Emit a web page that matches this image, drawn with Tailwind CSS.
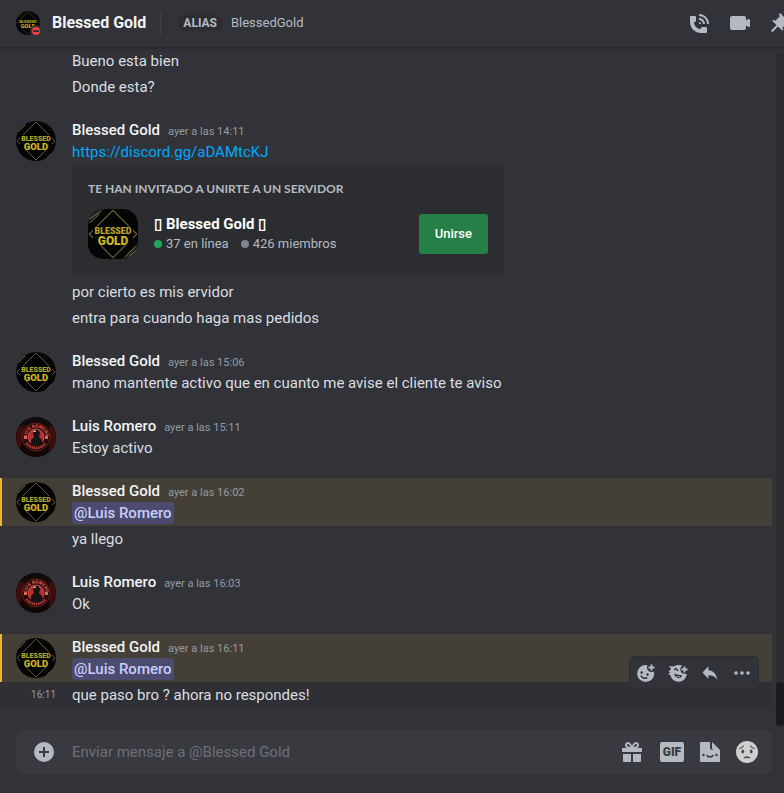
<!DOCTYPE html>
<html lang="es">
<head>
  <meta charset="UTF-8" />
  <meta name="viewport" content="width=device-width, initial-scale=1.0"/>
  <title>Blessed Gold</title>
  <script src="https://cdn.jsdelivr.net/npm/@tailwindcss/browser@4"></script>
</head>
<body class="h-screen flex flex-col overflow-hidden bg-[#313338] font-['Roboto','Liberation_Sans',sans-serif] text-[15px] text-[#dbdee1]">

  <!-- Shared avatar art -->
  <svg class="hidden">
    <symbol id="gold" viewBox="0 0 40 40">
      <rect width="40" height="40" fill="#050505"/>
      <path d="M0 12 13 0H0ZM40 27 27 40h13Z" fill="#25221b"/>
      <path d="M1 8 10 2M2 11l7-7M30 38l8-8M33 38l6-5" stroke="#77705c" stroke-width=".8"/>
      <path d="M20 1 39 20 20 39 1 20Z" fill="#030303" stroke="#6b603a" stroke-width=".9"/>
      <rect x="4" y="14" width="32" height="15" fill="#050505"/>
      <text x="20" y="20" text-anchor="middle" font-size="7" font-weight="900" fill="#b5a32c">BLESSED</text>
      <text x="20" y="28.5" text-anchor="middle" font-size="9.5" font-weight="900" fill="#cdb722">GOLD</text>
    </symbol>
    <symbol id="luis" viewBox="0 0 40 40">
      <rect width="40" height="40" fill="#130606"/>
      <path d="M0 8h9L3 38H0ZM33 8h7v28h-7Z" fill="#3c0d0a"/>
      <path d="M9 0h22l9 9H0Z" fill="#110b0c"/>
      <circle cx="20" cy="20" r="14" fill="#240c0d" stroke="#6a2020" stroke-width="1"/>
      <path id="arcTop" d="M10.500 20a9.500 9.500 0 0 1 19 0" fill="none"/>
      <path id="arcBottom" d="M7.500 20a12.500 12.500 0 0 0 25 0" fill="none"/>
      <text font-size="4.500" font-weight="900" fill="#d9534d" text-anchor="middle"><textPath href="#arcTop" startOffset="50%">LUIS ROMERO</textPath></text>
      <path d="M10.500 26a11.500 11.500 0 0 0 19 0" fill="none" stroke="#b9413f" stroke-width="2.500" stroke-dasharray="1.500 .7"/>
      <circle cx="20" cy="20" r="8" fill="#b32e2a" stroke="#df6a60" stroke-width=".7"/>
      <path d="M15 27v-4l3-3-1-4 2-3h3l2 3-1 4 3 3v4c-3 2-8 2-11 0Z" fill="#151313"/>
      <path d="m17 15 2-2 1 2Z" fill="#e8d6cf"/>
      <path d="M8 19h3v3H8ZM29 19h3v3h-3Z" fill="#e06359"/>
    </symbol>
  </svg>

  <!-- Header -->
  <header class="relative z-10 h-12 shrink-0 flex items-center pl-4 pb-px border-b border-[#26282c] shadow-sm">
    <div class="relative mr-3">
      <svg class="size-6 rounded-full" role="img" aria-label="Blessed Gold"><use href="#gold"/></svg>
      <span class="absolute -right-0.5 -bottom-0.5 size-3 rounded-full bg-[#f23f43] border-2 border-[#313338] flex items-center justify-center">
        <span class="w-1.5 h-0.5 bg-[#313338]"></span>
      </span>
    </div>
    <h1 class="text-base leading-5 font-bold text-[#f2f3f5]">Blessed Gold</h1>
    <div class="w-px h-6 mx-3.5 bg-[#3f4147]"></div>
    <span class="h-4 ml-0.5 px-1.5 rounded-full bg-[#2b2d31] text-xs leading-4 font-bold text-[#b5bac1]">ALIAS</span>
    <span class="ml-2 text-[13px] text-[#b5bac1]">BlessedGold</span>
    <nav class="ml-auto -mr-2 flex gap-4 text-[#b5bac1]">
      <button type="button" aria-label="Llamar">
        <svg class="size-6" viewBox="0 0 24 24" fill="currentColor"><path d="M11 5V3c5.515 0 10 4.486 10 10h-2c0-4.411-3.589-8-8-8Zm6 8h-2c0-2.205-1.794-4-4-4V7c3.309 0 6 2.691 6 6Zm-6-2v2h2c0-1.104-.895-2-2-2Zm3 5h4a1 1 0 0 1 1 1v4a1 1 0 0 1-1 1h-5C6.925 22 2 17.075 2 11V6a1 1 0 0 1 1-1h4a1 1 0 0 1 1 1v4a1 1 0 0 1-1 1H6c.063 3.938 3 7 7 7v-1a1 1 0 0 1 1-1Z"/></svg>
      </button>
      <button type="button" aria-label="Videollamada">
        <svg class="size-6" viewBox="0 0 24 24" fill="currentColor"><path d="M21.526 8.149a1 1 0 0 0-.973-.044L18 9.382V7a2 2 0 0 0-2-2H4a2 2 0 0 0-2 2v10a2 2 0 0 0 2 2h12a2 2 0 0 0 2-2v-2.382l2.553 1.276A1 1 0 0 0 22 15V9a1 1 0 0 0-.474-.851Z"/></svg>
      </button>
      <button type="button" aria-label="Mensajes fijados">
        <svg class="size-6" viewBox="0 0 24 24" fill="currentColor"><path d="m22 12-9.899-9.899-1.415 1.413 1.415 1.415-4.95 4.949-1.415-1.413L4.322 9.88l4.243 4.242-5.657 5.656 1.414 1.414 5.657-5.656 4.243 4.242 1.414-1.414-1.414-1.414L19.171 12l1.415 1.414L22 12Z"/></svg>
      </button>
    </nav>
  </header>

  <div class="flex-1 min-h-0 flex">
    <main class="flex-1 min-w-0 flex flex-col">
      <!-- Messages -->
      <div class="flex-1 min-h-0 overflow-hidden flex flex-col gap-[17px] leading-[22px]">
        <section class="pl-[72px]">
          <p class="py-0.5">Bueno esta bien</p>
          <p class="py-0.5">Donde esta?</p>
        </section>

        <section>
          <article class="flex gap-4 pl-4 py-0.5">
            <svg class="size-10 mt-0.5 shrink-0 rounded-full" role="img" aria-label="Blessed Gold"><use href="#gold"/></svg>
            <div class="flex-1 min-w-0">
              <h2 class="h-[22px] flex items-baseline gap-2"><span class="font-medium text-[#f2f3f5]">Blessed Gold</span><time class="text-[11px] text-[#949ba4]">ayer a las 14:11</time></h2>
              <p><a href="https://discord.gg/aDAMtcKJ" class="text-[#00a8fc]">https://discord.gg/aDAMtcKJ</a></p>
              <!-- Invite card -->
              <div class="my-0.5 w-full max-w-[432px] rounded bg-[#2b2d31] p-4">
                <h3 class="font-['Lato','Roboto',sans-serif] text-xs leading-4 mb-3 font-bold text-[#b5bac1]">TE HAN INVITADO A UNIRTE A UN SERVIDOR</h3>
                <div class="flex items-center gap-4">
                  <svg class="size-[50px] rounded-[15px]" role="img" aria-label="Blessed Gold"><use href="#gold"/></svg>
                  <div class="flex-1">
                    <p class="flex items-center gap-1 leading-5 font-bold text-white"><span>▯</span>Blessed Gold<span>▯</span></p>
                    <p class="flex items-center text-[13px] leading-5 text-[#b5bac1]">
                      <span class="size-2 mr-1 rounded-full bg-[#23a559]"></span>37 en línea
                      <span class="size-2 ml-3 mr-1 rounded-full bg-[#80848e]"></span>426 miembros
                    </p>
                  </div>
                  <button type="button" class="h-10 px-4 rounded-[3px] bg-[#248046] text-[13px] font-medium text-white">Unirse</button>
                </div>
              </div>
            </div>
          </article>
          <p class="pl-[72px] py-0.5">por cierto es mis ervidor</p>
          <p class="pl-[72px] py-0.5">entra para cuando haga mas pedidos</p>
        </section>

        <article class="flex gap-4 pl-4 py-0.5">
          <svg class="size-10 mt-0.5 shrink-0 rounded-full" role="img" aria-label="Blessed Gold"><use href="#gold"/></svg>
          <div>
            <h2 class="h-[22px] flex items-baseline gap-2"><span class="font-medium text-[#f2f3f5]">Blessed Gold</span><time class="text-[11px] text-[#949ba4]">ayer a las 15:06</time></h2>
            <p>mano mantente activo que en cuanto me avise el cliente te aviso</p>
          </div>
        </article>

        <article class="flex gap-4 pl-4 py-0.5">
          <svg class="size-10 mt-0.5 shrink-0 rounded-full" role="img" aria-label="Luis Romero"><use href="#luis"/></svg>
          <div>
            <h2 class="h-[22px] flex items-baseline gap-2"><span class="font-medium text-[#f2f3f5]">Luis Romero</span><time class="text-[11px] text-[#949ba4]">ayer a las 15:11</time></h2>
            <p>Estoy activo</p>
          </div>
        </article>

        <section>
          <article class="flex gap-4 pl-3.5 py-0.5 border-l-2 border-[#f0b232] bg-[#444037]">
            <svg class="size-10 mt-0.5 shrink-0 rounded-full" role="img" aria-label="Blessed Gold"><use href="#gold"/></svg>
            <div>
              <h2 class="h-[22px] flex items-baseline gap-2"><span class="font-medium text-[#f2f3f5]">Blessed Gold</span><time class="text-[11px] text-[#949ba4]">ayer a las 16:02</time></h2>
              <p class="flex"><a href="#" class="px-0.5 rounded-[3px] bg-[#4b4a6f] font-medium text-[#c9cdfb]">@Luis Romero</a></p>
            </div>
          </article>
          <p class="pl-[72px] py-0.5">ya llego</p>
        </section>

        <article class="flex gap-4 pl-4 py-0.5">
          <svg class="size-10 mt-0.5 shrink-0 rounded-full" role="img" aria-label="Luis Romero"><use href="#luis"/></svg>
          <div>
            <h2 class="h-[22px] flex items-baseline gap-2"><span class="font-medium text-[#f2f3f5]">Luis Romero</span><time class="text-[11px] text-[#949ba4]">ayer a las 16:03</time></h2>
            <p>Ok</p>
          </div>
        </article>

        <section>
          <article class="flex gap-4 pl-3.5 py-0.5 border-l-2 border-[#f0b232] bg-[#444037]">
            <svg class="size-10 mt-0.5 shrink-0 rounded-full" role="img" aria-label="Blessed Gold"><use href="#gold"/></svg>
            <div>
              <h2 class="h-[22px] flex items-baseline gap-2"><span class="font-medium text-[#f2f3f5]">Blessed Gold</span><time class="text-[11px] text-[#949ba4]">ayer a las 16:11</time></h2>
              <p class="flex"><a href="#" class="px-0.5 rounded-[3px] bg-[#4b4a6f] font-medium text-[#c9cdfb]">@Luis Romero</a></p>
            </div>
          </article>
          <div class="relative flex gap-4 py-0.5 bg-[#2e3035]">
            <time class="w-14 text-right text-[10px] text-[#949ba4]">16:11</time>
            <p>que paso bro ? ahora no respondes!</p>
            <!-- Hover toolbar -->
            <div class="absolute right-3.5 -top-[25px] h-8 flex rounded bg-[#313338] ring-1 ring-[#2b2d31] text-[#b5bac1]">
              <button type="button" class="w-8 flex items-center justify-center" aria-label="Añadir reacción">
                <svg class="size-5" viewBox="0 0 20 20"><circle cx="9.700" cy="10.500" r="8.500" fill="currentColor"/><circle cx="15.500" cy="4.500" r="4.600" fill="#313338"/><path d="M15.500 1.500v6M12.500 4.500h6" stroke="currentColor" stroke-width="1.800"/><circle cx="5.600" cy="9.500" r="1.200" fill="#313338"/><circle cx="11.500" cy="11.500" r="1.200" fill="#313338"/><path d="M4.800 12.500c1 2.500 4 3.500 6.500 2" fill="none" stroke="#313338" stroke-width="1.500"/></svg>
              </button>
              <button type="button" class="w-8 flex items-center justify-center" aria-label="Añadir superreacción">
                <svg class="size-5" viewBox="0 0 20 20"><path d="M14 2.500C11.500 1.500 8 1.700 5.500 3.500L1 3l2 3-1 1.500L.5 8l1.500 2-2 1 2.500 1.300C3.500 16.500 7 19 11 18.700c4.500-.4 7.500-3.700 7.700-7.700L14 9Z" fill="currentColor"/><circle cx="16.500" cy="6.500" r="4.200" fill="#313338"/><path d="M16.500 3.500v6M13.500 6.500h6" stroke="currentColor" stroke-width="1.800"/><path d="m6 7 2-1.500L10 8" fill="none" stroke="#313338" stroke-width="1.300"/><path d="M6 10.500c2.700 1.200 5 1.700 8 1.700-.5 4.300-7 4-8-1.700Z" fill="#313338"/><path d="M8.500 13.800c1.200-.5 2.500-.3 3.500.4" stroke="currentColor" fill="none"/></svg>
              </button>
              <button type="button" class="w-8 flex items-center justify-center" aria-label="Responder">
                <svg class="size-5" viewBox="0 0 24 24" fill="currentColor"><path d="M10 8.267V4l-7 7.467 7 7.466V14.560c5 0 8.500 1.707 11 5.440-1-5.333-4-10.667-11-11.733Z"/></svg>
              </button>
              <button type="button" class="w-8 flex items-center justify-center" aria-label="Más">
                <svg class="size-5" viewBox="0 0 20 20" fill="currentColor"><circle cx="4" cy="10" r="1.800"/><circle cx="10" cy="10" r="1.800"/><circle cx="16" cy="10" r="1.800"/></svg>
              </button>
            </div>
          </div>
        </section>
      </div>

      <!-- Message box -->
      <form class="ml-4 mb-[19px] h-11 shrink-0 flex items-center rounded-lg bg-[#383a40] text-[#b5bac1]">
        <button type="button" class="w-14 flex items-center justify-center" aria-label="Adjuntar">
          <svg class="size-6" viewBox="0 0 24 24"><circle cx="12" cy="12" r="10" fill="currentColor"/><path d="M12 7v10M7 12h10" stroke="#383a40" stroke-width="2"/></svg>
        </button>
        <input type="text" aria-label="Enviar mensaje a @Blessed Gold" placeholder="Enviar mensaje a @Blessed Gold" class="flex-1 min-w-0 bg-transparent leading-[22px] placeholder:text-[#6d6f78] focus:outline-none"/>
        <div class="flex items-center gap-3.5 pr-3.5">
          <button type="button" class="mr-0.5" aria-label="Enviar un regalo">
            <svg class="size-6" viewBox="0 0 24 24" fill="currentColor"><path d="M2 9a1 1 0 0 1 1-1h18a1 1 0 0 1 1 1v3H2ZM3 14h8v8H4a1 1 0 0 1-1-1ZM13 14h8v7a1 1 0 0 1-1 1h-7Z"/><path d="M11.500 8C9 8 6 7.500 6 5s4.500-3.500 5.500 3M12.500 8C15 8 18 7.500 18 5s-4.500-3.500-5.500 3" fill="none" stroke="currentColor" stroke-width="2"/></svg>
          </button>
          <button type="button" class="w-6 h-5 rounded-xs bg-[#b5bac1] text-xs leading-5 font-black text-[#383a40]">GIF</button>
          <button type="button" aria-label="Stickers">
            <svg class="size-6" viewBox="0 0 24 24"><path d="M3 2h9v5.500A2.500 2.500 0 0 0 14.500 10H22v11a1 1 0 0 1-1 1H3a1 1 0 0 1-1-1V3a1 1 0 0 1 1-1ZM14 2l8 8h-6a2 2 0 0 1-2-2Z" fill="currentColor"/><circle cx="5.500" cy="15" r="1.200" fill="#383a40"/><circle cx="18.500" cy="15" r="1.200" fill="#383a40"/><path d="M9 15c.5 2.500 5.500 2.500 6 0" fill="none" stroke="#383a40" stroke-width="1.500"/></svg>
          </button>
          <button type="button" aria-label="Emojis">
            <svg class="size-[22px]" viewBox="0 0 22 22"><circle cx="11" cy="11" r="11" fill="#cfcfcf"/><ellipse cx="6.800" cy="10.500" rx="1.400" ry="2" fill="#4b4b4b"/><ellipse cx="15.200" cy="10.500" rx="1.400" ry="2" fill="#4b4b4b"/><path d="M3.500 7.500C5 7.200 6.500 6.500 7.300 5M18.500 7.500C17 7.200 15.500 6.500 14.700 5" fill="none" stroke="#4b4b4b" stroke-width="1.200" stroke-linecap="round"/><path d="M7.500 17.500c1-3 6-3 7 0-2-.8-5-.8-7 0Z" fill="#4b4b4b"/></svg>
          </button>
        </div>
      </form>
    </main>

    <!-- Scrollbar -->
    <aside class="w-3 shrink-0 pl-1 pt-1 flex flex-col">
      <div class="flex-1 flex flex-col justify-end rounded-t bg-[#2b2d31] mb-[67px]">
        <div class="h-11 rounded bg-[#1a1b1e]"></div>
      </div>
    </aside>
  </div>
</body>
</html>
